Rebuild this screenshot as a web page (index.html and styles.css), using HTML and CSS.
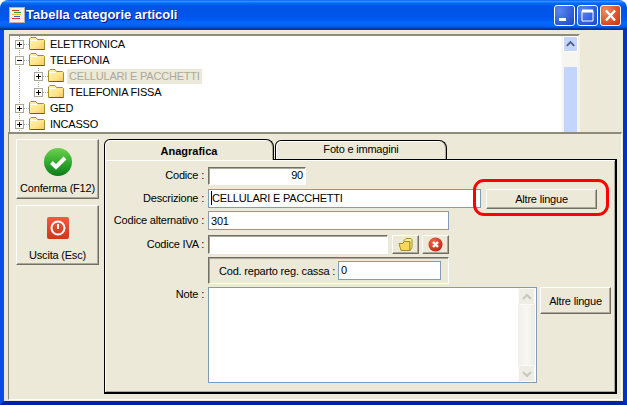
FILE: index.html
```html
<!DOCTYPE html>
<html lang="it">
<head>
<meta charset="utf-8">
<title>Tabella categorie articoli</title>
<link rel="stylesheet" href="styles.css">
</head>
<body>
<svg class="defs" width="0" height="0" aria-hidden="true">
  <defs>
    <linearGradient id="fold" x1="0" y1="0" x2="1" y2="1">
      <stop offset="0" stop-color="#fff6b8"/><stop offset="0.6" stop-color="#ffe48a"/><stop offset="1" stop-color="#f2c45c"/>
    </linearGradient>
    <symbol id="folder" viewBox="0 0 16 13">
      <path d="M.5 12.5V2L2 .5h5L8.500 2.500h6l1 1v9z" fill="url(#fold)" stroke="#a8901c"/>
      <path d="M1 3.500h7" stroke="#fff" stroke-width="1"/>
      <path d="M1.500 12.500h14" stroke="#6e6010"/>
    </symbol>
    <symbol id="box" viewBox="0 0 9 9">
      <rect x=".5" y=".5" width="8" height="8" fill="#fff" stroke="#aca899"/>
    </symbol>
    <linearGradient id="grn" x1="0" y1="0" x2="0" y2="1">
      <stop offset="0" stop-color="#6fd04f"/><stop offset="0.55" stop-color="#2ea82a"/><stop offset="1" stop-color="#0f7a1c"/>
    </linearGradient>
    <linearGradient id="red" x1="0" y1="0" x2="0" y2="1">
      <stop offset="0" stop-color="#ef5b3f"/><stop offset="1" stop-color="#d13617"/>
    </linearGradient>
    <radialGradient id="redc" cx="0.4" cy="0.35" r="0.7">
      <stop offset="0" stop-color="#f77050"/><stop offset="1" stop-color="#c81a10"/>
    </radialGradient>
  </defs>
</svg>

<div class="window">
  <header class="titlebar">
    <svg class="app-icon" width="16" height="16" viewBox="0 0 16 16">
      <rect x=".5" y=".5" width="15" height="15" fill="#f4f1e4" stroke="#b8b4a0"/>
      <path d="M3 3.500h7" stroke="#e03030"/><path d="M5 5.500h7" stroke="#30a040"/><path d="M3 7.500h9" stroke="#e8c020"/><path d="M5 9.500h6" stroke="#3060d0"/><path d="M3 11.500h8" stroke="#e03030"/>
    </svg>
    <span class="title">Tabella categorie articoli</span>
    <div class="controls">
      <div class="wbtn"><svg width="19" height="19" viewBox="0 0 19 19"><rect x="4" y="12" width="7" height="3" fill="#fff"/></svg></div>
      <div class="wbtn"><svg width="19" height="19" viewBox="0 0 19 19"><path d="M4 5h11v10H4z" fill="none" stroke="#fff"/><path d="M4 5h11" stroke="#fff" stroke-width="3"/></svg></div>
      <div class="wbtn wclose"><svg width="19" height="19" viewBox="0 0 19 19"><path d="M5 4.500l9 10M14 4.500l-9 10" stroke="#fff" stroke-width="2.400"/></svg></div>
    </div>
  </header>

  <div class="client">
    <div class="tree-panel">
      <div class="tree">
        <div class="row">
          <svg class="cn root" viewBox="0 0 33 16"><path d="M4.500 0v16" class="dots"/><path d="M9 8.500h5" class="dots"/><use href="#box" x="0" y="4" width="9" height="9"/><path d="M2 8.500h5M4.500 6v5" stroke="#000"/><use href="#folder" x="14" y="1" width="16" height="13"/></svg>
          <span class="lbl">ELETTRONICA</span>
        </div>
        <div class="row">
          <svg class="cn root" viewBox="0 0 33 16"><path d="M4.500 0v16" class="dots"/><path d="M9 8.500h5" class="dots"/><use href="#box" x="0" y="4" width="9" height="9"/><path d="M2 8.500h5" stroke="#000"/><use href="#folder" x="14" y="1" width="16" height="13"/></svg>
          <span class="lbl">TELEFONIA</span>
        </div>
        <div class="row">
          <svg class="cn child" viewBox="0 0 52 16"><path d="M4.500 0v16M23.500 0v16" class="dots"/><path d="M28 8.500h5" class="dots"/><use href="#box" x="19" y="4" width="9" height="9"/><path d="M21 8.500h5M23.500 6v5" stroke="#000"/><use href="#folder" x="33" y="1" width="16" height="13"/></svg>
          <span class="lbl sel">CELLULARI E PACCHETTI</span>
        </div>
        <div class="row">
          <svg class="cn child" viewBox="0 0 52 16"><path d="M4.500 0v16M23.500 0v8" class="dots"/><path d="M28 8.500h5" class="dots"/><use href="#box" x="19" y="4" width="9" height="9"/><path d="M21 8.500h5M23.500 6v5" stroke="#000"/><use href="#folder" x="33" y="1" width="16" height="13"/></svg>
          <span class="lbl">TELEFONIA FISSA</span>
        </div>
        <div class="row">
          <svg class="cn root" viewBox="0 0 33 16"><path d="M4.500 0v16" class="dots"/><path d="M9 8.500h5" class="dots"/><use href="#box" x="0" y="4" width="9" height="9"/><path d="M2 8.500h5M4.500 6v5" stroke="#000"/><use href="#folder" x="14" y="1" width="16" height="13"/></svg>
          <span class="lbl">GED</span>
        </div>
        <div class="row">
          <svg class="cn root" viewBox="0 0 33 16"><path d="M4.500 0v16" class="dots"/><path d="M9 8.500h5" class="dots"/><use href="#box" x="0" y="4" width="9" height="9"/><path d="M2 8.500h5M4.500 6v5" stroke="#000"/><use href="#folder" x="14" y="1" width="16" height="13"/></svg>
          <span class="lbl">INCASSO</span>
        </div>
      </div>
      <div class="vscroll">
        <div class="sbtn"><svg width="14" height="15" viewBox="0 0 14 15"><path d="M3 9l4-4 4 4" fill="none" stroke="#4d6185" stroke-width="2"/></svg></div>
        <div class="sthumb"></div>
      </div>
    </div>

    <div class="main-panel">
      <div class="side">
        <div class="btn big">
          <svg width="28" height="28" viewBox="0 0 28 28"><circle cx="14" cy="14" r="14" fill="url(#grn)"/><path d="M7.500 14.500l4.500 4.500 9-9" fill="none" stroke="#fff" stroke-width="4"/></svg>
          <span>Conferma (F12)</span>
        </div>
        <div class="btn big stop">
          <svg width="22" height="22" viewBox="0 0 22 22"><rect width="22" height="22" rx="2" fill="url(#red)"/><circle cx="11" cy="11" r="6.500" fill="none" stroke="#fff" stroke-width="2"/><path d="M11 7v5" stroke="#fff" stroke-width="2"/></svg>
          <span>Uscita (Esc)</span>
        </div>
      </div>

      <div class="tabs">
        <div class="tabstrip">
          <div class="tab active">Anagrafica</div>
          <div class="tab">Foto e immagini</div>
        </div>
        <div class="tabpage">
          <div class="frow r1">
            <label class="flabel">Codice :</label>
            <div class="field sunk num">90</div>
          </div>
          <div class="frow r2">
            <label class="flabel">Descrizione :</label>
            <div class="field blue desc"><i class="caret"></i>CELLULARI E PACCHETTI</div>
            <div class="btn lingue1">Altre lingue</div>
          </div>
          <div class="frow r3">
            <label class="flabel">Codice alternativo :</label>
            <div class="field blue alt">301</div>
          </div>
          <div class="frow r4">
            <label class="flabel">Codice IVA :</label>
            <div class="field sunk iva"></div>
            <div class="btn ico first">
              <svg width="15" height="14" viewBox="0 0 15 14"><path d="M1 5.500h4l1-2h6v9H3z" fill="#f6d860" stroke="#a8901c"/><path d="M6 2.500l2-2h5l1 1v8l-2 3V3.500H6z" fill="#ffeb99" stroke="#a8901c"/></svg>
            </div>
            <div class="btn ico">
              <svg width="15" height="15" viewBox="0 0 15 15"><circle cx="7.500" cy="7.500" r="7" fill="url(#redc)"/><path d="M5 5l5 5M10 5l-5 5" stroke="#fff" stroke-width="2.400"/></svg>
            </div>
          </div>
          <div class="frow r5">
            <span class="flabel"></span>
            <div class="group">
              <label class="glabel">Cod. reparto reg. cassa :</label>
              <div class="field blue rep">0</div>
            </div>
          </div>
          <div class="frow r6">
            <label class="flabel top">Note :</label>
            <div class="field blue note">
              <div class="nscroll">
                <div class="dbtn"><svg width="14" height="14" viewBox="0 0 14 14"><path d="M3 9l4-4 4 4" fill="none" stroke="#c9c7ba" stroke-width="2"/></svg></div>
                <div class="dbtn"><svg width="14" height="14" viewBox="0 0 14 14"><path d="M3 5l4 4 4-4" fill="none" stroke="#c9c7ba" stroke-width="2"/></svg></div>
              </div>
            </div>
            <div class="btn lingue2">Altre lingue</div>
          </div>
        </div>
      </div>
    </div>
  </div>
  <div class="callout"></div>
</div>
</body>
</html>
```

FILE: styles.css
```css
* { box-sizing: border-box; }
html, body { margin: 0; padding: 0; background: #fff; }
body { width: 627px; height: 405px; overflow: hidden; font: 11px/14px "Liberation Sans", Arial, sans-serif; letter-spacing: -0.2px; color: #000; }
.defs { display: block; height: 0; }

.window { position: relative; width: 627px; height: 405px; display: flex; flex-direction: column; }

.titlebar {
  height: 30px; flex: none; display: flex; align-items: center; padding: 0 6px 0 9px;
  border-radius: 8px 8px 0 0;
  background: linear-gradient(180deg, #0058ee 0, #3593ff 4%, #288eff 6%, #127dff 8%, #036ffc 10%, #0262ee 14%, #0057e5 20%, #0054e3 24%, #0055eb 56%, #005bf5 66%, #026afe 76%, #0062ef 86%, #0052d6 92%, #0040ab 94%, #003092 100%);
}
.app-icon { flex: none; }
.title { margin-left: 1px; font: bold 13px/16px "Liberation Sans", Arial, sans-serif; letter-spacing: 0; color: #fff; text-shadow: 1px 1px 0 #0f1089; }
.controls { margin-left: auto; display: flex; gap: 2px; }
.wbtn { width: 21px; height: 21px; border: 1px solid #fff; border-radius: 3px; background: radial-gradient(circle at 25% 25%, #5a86ee, #2a58d8 70%, #1b46c4); display: flex; align-items: center; justify-content: center; }
.wclose { background: radial-gradient(circle at 25% 25%, #ee8a66, #d8491f 70%, #c43210); }

.client {
  flex: 1; min-height: 0; display: flex; flex-direction: column; background: #ece9d8;
  border-style: solid; border-width: 0 4px 4px; border-color: #0a47dd #0332c4 #0020a8 #0a4ae6;
  padding: 4px 1px 1px 4px;
}

.tree-panel {
  flex: none; height: 98px; margin: 0 42px 0 1px; display: flex; overflow: hidden; background: #fff;
  border-style: solid; border-width: 2px 2px 0 1px; border-color: #8e8b7b #f5f3e8 #fff #8e8b7b;
}
.tree { flex: 1; min-width: 0; overflow: hidden; padding-left: 5px; }
.row { height: 16px; display: flex; align-items: center; }
.cn { height: 16px; flex: none; display: block; }
.cn.root { width: 33px; }
.cn.child { width: 52px; }
.dots { stroke: #aca899; stroke-dasharray: 1 1; fill: none; }
.lbl { padding: 0 2px; height: 15px; line-height: 15px; white-space: nowrap; }
.lbl.sel { background: #ece9d8; color: #aca899; }

.vscroll { width: 17px; flex: none; background: #f6f5ef; display: flex; flex-direction: column; align-items: center; border-left: 1px solid #fbfbf7; }
.sbtn { width: 15px; height: 16px; flex: none; border: 1px solid #fff; border-radius: 2px; background: #c5d5f8; display: flex; align-items: center; justify-content: center; }
.sthumb { width: 15px; flex: 1; margin-top: 14px; border: 1px solid #f0f4ff; border-bottom: 0; border-radius: 2px 2px 0 0; background: #c3d5fb; }

.main-panel {
  flex: 1; min-height: 0; display: flex; padding: 5px 4px 5px 7px; gap: 5px;
  border-style: solid; border-width: 2px 1px 1px 1px; border-color: #8e8b7b #fff #fff #8e8b7b;
}

.btn {
  display: flex; align-items: center; justify-content: center; background: #ece9d8; white-space: nowrap;
  border: 1px solid; border-color: #fff #716f64 #716f64 #fff;
  box-shadow: inset -1px -1px 0 #aca899;
}
.btn svg { flex: none; }
.side { width: 83px; flex: none; display: flex; flex-direction: column; gap: 6px; }
.big { height: 60px; flex-direction: column; justify-content: flex-start; padding-top: 8px; gap: 5px; }
.big.stop { padding-top: 11px; gap: 9px; }

.tabs { flex: 1; min-width: 0; display: flex; flex-direction: column; }
.tabstrip { height: 20px; flex: none; display: flex; align-items: flex-end; gap: 1px; }
.tab {
  width: 172px; height: 19px; text-align: center; line-height: 17px; background: #ece9d8;
  border: 1px solid #000; border-bottom: 0; border-radius: 6px 8px 0 0;
  box-shadow: inset 1px 1px 0 #fff, inset -1px 0 0 #aca899;
}
.tab.active { position: relative; z-index: 1; width: 170px; height: 21px; margin-bottom: -1px; font-weight: bold; line-height: 22px; letter-spacing: 0; }

.tabpage {
  flex: 1; min-height: 0; background: #ece9d8; padding: 7px 4px 0 0;
  border: 1px solid #000; border-width: 1px 2px 2px 1px;
  box-shadow: inset 1px 1px 0 #fff, inset -1px -1px 0 #aca899;
  display: flex; flex-direction: column;
}

.frow { display: flex; align-items: center; flex: none; }
.flabel { width: 99px; flex: none; margin-right: 4px; text-align: right; white-space: nowrap; line-height: 13px; margin-top: -1px; }
.flabel.top { align-self: flex-start; margin-top: 1px; }
.r1 { height: 18px; }
.r2 { height: 19px; margin-top: 4px; }
.r3 { height: 19px; margin-top: 3px; }
.r4 { height: 19px; margin-top: 5px; }
.r5 { height: 27px; margin-top: 3px; }
.r6 { height: 96px; margin-top: 3px; align-items: flex-start; }

.field { background: #fff; height: 100%; padding: 0 2px; line-height: 16px; white-space: nowrap; }
.blue { border: 1px solid #7f9db9; }
.sunk { border: 1px solid; border-color: #716f64 #fff #fff #716f64; box-shadow: inset 1px 1px 0 #aca899; padding-left: 3px; line-height: 15px; }
.num { width: 98px; text-align: right; }
.desc { width: 273px; }
.caret { display: inline-block; width: 1px; height: 14px; background: #000; vertical-align: -3px; }
.alt { width: 241px; padding-top: 1px; }
.iva { width: 180px; }
.ico { width: 27px; height: 19px; }
.ico.first { margin-left: 4px; }
.ico + .ico { margin-left: 3px; }
.lingue1 { width: 111px; height: 20px; margin-left: 5px; }
.lingue2 { width: 71px; height: 27px; margin-left: 3px; }

.group {
  width: 241px; height: 27px; display: flex; align-items: center; background: #ece9d8;
  border: 1px solid; border-color: #716f64 #fff #fff #716f64; box-shadow: inset 1px 1px 0 #aca899;
  padding-left: 10px;
}
.glabel { width: 119px; flex: none; white-space: nowrap; }
.rep { width: 103px; height: 19px; }

.note { width: 329px; padding: 0; display: flex; justify-content: flex-end; }
.nscroll { width: 17px; background: linear-gradient(90deg, #f0efe8, #f8f7f2 50%, #eeece3); display: flex; flex-direction: column; justify-content: space-between; margin-right: 1px; }
.dbtn { height: 17px; background: #efeee6; border: 1px solid #fbfaf5; border-radius: 2px; display: flex; align-items: center; justify-content: center; }

.callout { position: absolute; left: 473px; top: 179px; width: 136px; height: 37px; border: 3px solid #f00; border-radius: 11px; pointer-events: none; }
```
